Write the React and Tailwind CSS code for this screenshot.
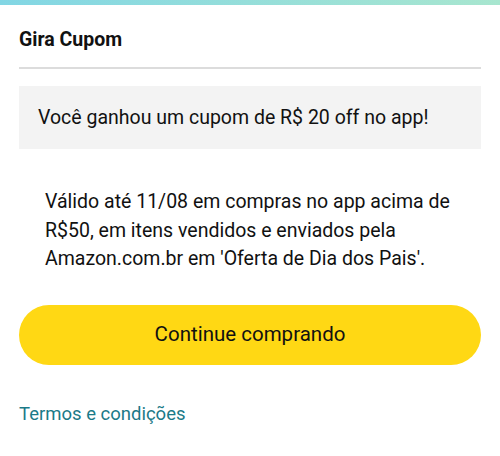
import React from 'react';

const App = () => (
  <div className="w-[500px] h-[456px] bg-white flex flex-col" style={{ fontFamily: 'Roboto, "Noto Sans", sans-serif' }}>
    <div className="h-[5px] bg-gradient-to-r from-[#82d6e4] to-[#a8e6cf]" />

    <div className="px-[19px]">
      <h1 className="pt-[23px] pb-[15px] text-[19.5px] font-bold text-[#111] leading-[24px]">Gira Cupom</h1>
      <div className="h-[2px] bg-[#dcdcdc]" />

      <div className="mt-[17px] bg-[#f3f3f3] h-[63px] px-[19px] flex items-center">
        <p className="text-[19.5px] text-[#111]">Você ganhou um cupom de R$ 20 off no app!</p>
      </div>

      <p className="mt-[39px] pl-[26px] pr-[10px] text-[19.5px] leading-[28.5px] text-[#111]">
        Válido até 11/08 em compras no app acima de R$50, em itens vendidos e enviados pela Amazon.com.br em 'Oferta de Dia dos Pais'.
      </p>

      <button className="mt-[31px] w-full h-[60px] rounded-full bg-[#ffd814] text-[20.5px] text-[#111]">
        Continue comprando
      </button>

      <a href="#" className="block mt-[37px] text-[18.5px] leading-[24px] text-[#1b7a88]">Termos e condições</a>
    </div>
  </div>
);

export default App;
